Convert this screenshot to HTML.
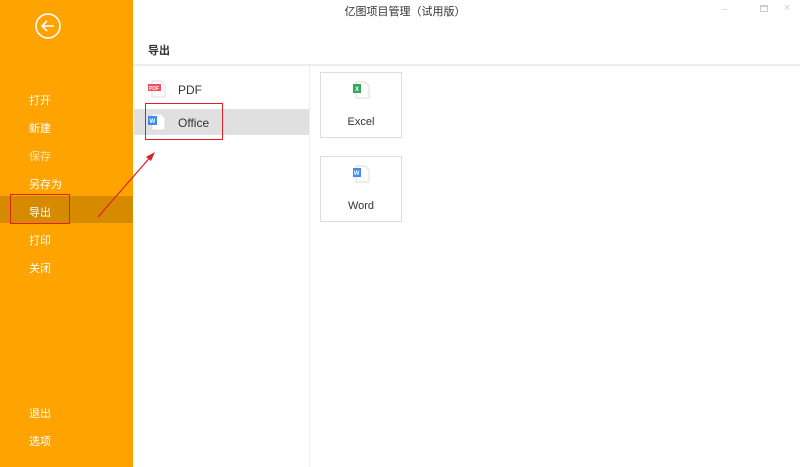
<!DOCTYPE html><html><head><meta charset="utf-8"><style>
*{margin:0;padding:0;box-sizing:border-box}
body{width:800px;height:467px;overflow:hidden;background:#fff;font-family:"Liberation Sans","Noto Sans CJK SC",sans-serif;position:relative}
.side{position:absolute;left:0;top:0;width:133px;height:467px;background:#FFA300}
.it{position:absolute;left:29px;font-size:11px;color:#fff}
.abs{position:absolute}
.card{position:absolute;left:320px;width:82px;height:66px;border:1px solid #ddd;background:#fff;font-size:11px;color:#333;text-align:center}
</style></head><body>
<div class="side">
<svg class="abs" style="left:34px;top:12px" width="28" height="28" viewBox="0 0 28 28"><circle cx="14" cy="14" r="12" fill="none" stroke="#fff" stroke-width="1.6"/><path d="M8 14H20M13 9L8 14L13 19" fill="none" stroke="#fff" stroke-width="1.6"/></svg>
<div class="it" style="top:92px">打开</div>
<div class="it" style="top:120px">新建</div>
<div class="it" style="top:148px;color:#FFE2A8">保存</div>
<div class="it" style="top:176px">另存为</div>
<div class="abs" style="left:0;top:196px;width:133px;height:27px;background:#D68A00"></div>
<div class="it" style="top:204px">导出</div>
<div class="it" style="top:232px">打印</div>
<div class="it" style="top:260px">关闭</div>
<div class="it" style="top:405px">退出</div>
<div class="it" style="top:433px">选项</div>
</div>
<div class="abs" style="left:10px;top:194px;width:60px;height:30px;border:1px solid #E02020"></div>
<div class="abs" style="left:0;top:3px;width:800px;text-align:center;font-size:11px;color:#333;padding-left:10px">亿图项目管理（试用版）</div>
<div class="abs" style="left:722px;top:4px;color:#ccc;font-size:10px">–</div>
<div class="abs" style="left:760px;top:5px;width:8px;height:7px;border:1px solid #ccc;border-top-width:2px"></div>
<div class="abs" style="left:784px;top:2px;color:#ccc;font-size:11px">×</div>
<div class="abs" style="left:148px;top:42px;font-size:11px;font-weight:bold;color:#333">导出</div>
<div class="abs" style="left:133px;top:64px;width:667px;height:2px;background:#EEE"></div>
<div class="abs" style="left:309px;top:66px;width:1px;height:401px;background:#EEE"></div>
<div class="abs" style="left:134px;top:109px;width:175px;height:26px;background:#E0E0E0"></div>
<svg class="abs" style="left:148px;top:80px" width="18" height="18"><path d="M4 1H13L17 5V17H4Z" fill="#fff" stroke="#ddd"/><rect x="0" y="4" width="13" height="7" fill="#F25060"/><text x="1" y="10" font-size="5" fill="#fff" font-family="Liberation Sans" font-weight="bold">PDF</text></svg>
<div class="abs" style="left:178px;top:83px;font-size:12px;color:#333">PDF</div>
<svg class="abs" style="left:148px;top:113px" width="18" height="18"><path d="M4 1H13L17 5V17H4Z" fill="#fff" stroke="#ddd"/><rect x="0" y="3" width="9" height="9" fill="#3A8EF0"/><text x="1.5" y="10" font-size="6" fill="#fff" font-family="Liberation Sans" font-weight="bold">W</text></svg>
<div class="abs" style="left:178px;top:116px;font-size:12px;color:#333">Office</div>
<div class="abs" style="left:145px;top:103px;width:78px;height:37px;border:1px solid #E02020"></div>
<svg class="abs" style="left:95px;top:150px" width="65" height="70"><path d="M3 67L58 4" stroke="#E02020" stroke-width="1.2"/><path d="M60 2L51 7L56 11Z" fill="#E02020"/></svg>
<div class="card" style="top:72px"><svg class="abs" style="left:31px;top:8px" width="18" height="18"><path d="M4 1H13L17 5V17H4Z" fill="#fff" stroke="#ddd"/><rect x="1" y="3" width="8" height="9" fill="#2EAA5A"/><text x="3" y="10" font-size="6" fill="#fff" font-family="Liberation Sans" font-weight="bold">X</text></svg><div class="abs" style="left:0;width:80px;top:43px">Excel</div></div>
<div class="card" style="top:156px"><svg class="abs" style="left:31px;top:8px" width="18" height="18"><path d="M4 1H13L17 5V17H4Z" fill="#fff" stroke="#ddd"/><rect x="1" y="3" width="8" height="9" fill="#3A8EF0"/><text x="1.8" y="10" font-size="6" fill="#fff" font-family="Liberation Sans" font-weight="bold">W</text></svg><div class="abs" style="left:0;width:80px;top:43px">Word</div></div>
</body></html>
